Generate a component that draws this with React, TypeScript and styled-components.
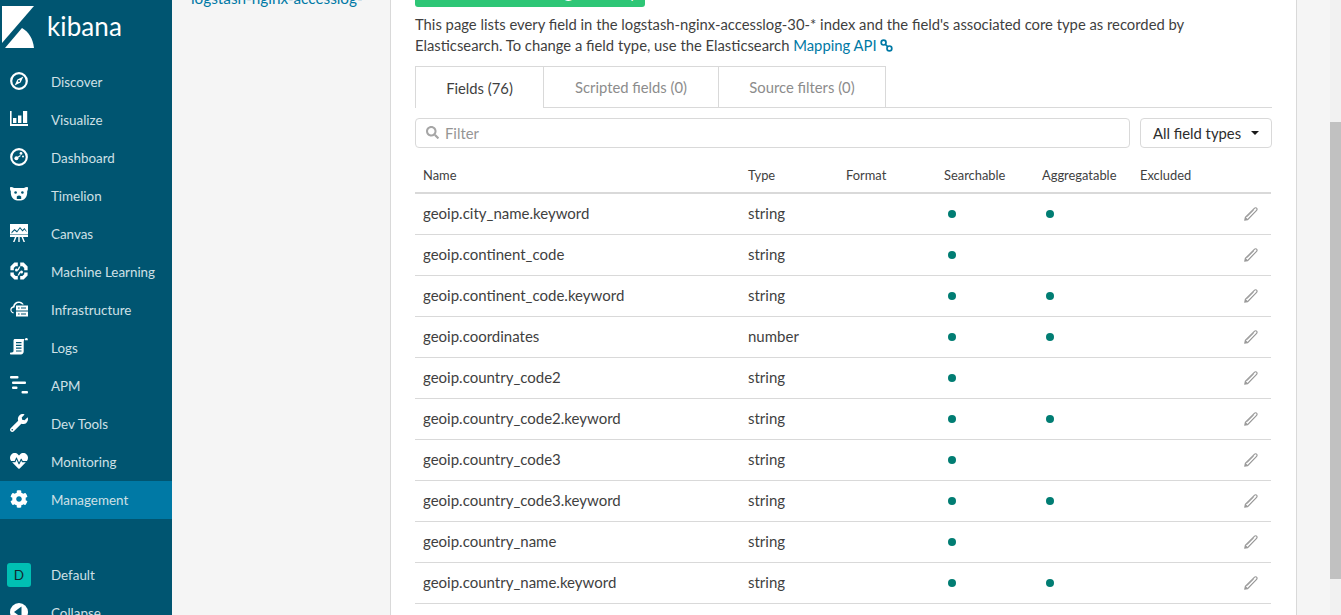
import React from 'react'
import styled, { createGlobalStyle } from 'styled-components'
import { FaCog, FaHeartbeat, FaSearch, FaWrench } from 'react-icons/fa'

const Global = createGlobalStyle`
	html, body {
		margin: 0;
		padding: 0;
		height: 615px;
		overflow: hidden;
		background: #f5f5f5;
	}
	* {
		box-sizing: border-box;
	}
`

const Page = styled.div`
	display: flex;
	height: 615px;
	overflow: hidden;
	font-family: Lato, 'Liberation Sans', sans-serif;
	color: #3f3f3f;
`

const Sidebar = styled.nav`
	flex: 0 0 172px;
	background: #005571;
	display: flex;
	flex-direction: column;
	overflow: hidden;
`

const Brand = styled.div`
	flex: 0 0 63px;
	display: flex;
	align-items: flex-start;
	padding: 6px 0 0 2px;
	gap: 13px;
`

const BrandName = styled.span`
	font-size: 26px;
	line-height: 27px;
	margin-top: 7px;
	color: #fff;
	letter-spacing: 0.1px;
`

const NavList = styled.div`
	flex: 0 0 auto;
	display: flex;
	flex-direction: column;
`

const BottomList = styled(NavList)`
	margin-top: 37px;
`

const NavItem = styled.div<{ $active?: boolean }>`
	flex: 0 0 38px;
	height: 38px;
	display: flex;
	align-items: center;
	padding-left: 10px;
	gap: 23px;
	font-size: 13.4px;
	color: #cfe0e6;
	background: ${(p) => (p.$active ? '#0079a5' : 'transparent')};
	svg {
		flex: 0 0 18px;
		width: 18px;
		height: 18px;
		color: #fff;
		margin-top: -2px;
	}
`

const AvatarItem = styled(NavItem)`
	padding-left: 7px;
	gap: 20px;
`

const Avatar = styled.span`
	width: 24px;
	height: 24px;
	border-radius: 3px;
	background: #00bfb3;
	color: #10272e;
	font-size: 13.5px;
	display: flex;
	align-items: center;
	justify-content: center;
`

const SubNav = styled.aside`
	flex: 0 0 219px;
	background: #f5f5f5;
	border-right: 1px solid #d9d9d9;
	padding-left: 19px;
	overflow: hidden;
`

const PatternLink = styled.a`
	display: block;
	margin-top: -12px;
	font-size: 15.3px;
	line-height: 20px;
	color: #0079a5;
`

const Main = styled.main`
	flex: 0 0 906px;
	background: #fff;
	border-right: 1px solid #d9d9d9;
	padding: 0 24px;
	overflow: hidden;
`

const TimeBadge = styled.div`
	width: 230px;
	height: 7px;
	background: #2ec676;
	border-radius: 0 0 3px 3px;
	overflow: hidden;
	color: #fff;
	font-size: 14px;
	line-height: 20px;
	text-align: center;
`

const BadgeText = styled.div`
	margin-top: -16px;
`

const Description = styled.p`
	margin: 7px 0 0;
	font-size: 14.8px;
	line-height: 21px;
	color: #3f3f3f;
`

const Anchor = styled.a`
	color: #0079a5;
	svg {
		width: 13px;
		height: 13px;
		margin-left: 3px;
		vertical-align: -1px;
	}
`

const Tabs = styled.div`
	display: flex;
	margin-top: 10px;
	height: 42px;
	width: 857px;
	border-bottom: 1px solid #d9d9d9;
`

const Tab = styled.div<{ $active?: boolean; $w: number }>`
	flex: 0 0 ${(p) => p.$w}px;
	height: ${(p) => (p.$active ? 42 : 41)}px;
	border: 1px solid #d9d9d9;
	border-left-width: ${(p) => (p.$active ? 1 : 0)}px;
	border-bottom: 0;
	background: #fff;
	display: flex;
	align-items: center;
	justify-content: center;
	font-size: 14.8px;
	color: ${(p) => (p.$active ? '#3f3f3f' : '#8c8c8c')};
`

const FilterRow = styled.div`
	display: flex;
	gap: 10px;
	margin-top: 10px;
	width: 857px;
`

const FilterBox = styled.div`
	flex: 1;
	height: 30px;
	border: 1px solid #d9d9d9;
	border-radius: 4px;
	display: flex;
	align-items: center;
	padding: 0 0 1px 10px;
	gap: 6px;
	font-size: 14.8px;
	color: #959595;
	svg {
		width: 13px;
		height: 13px;
		color: #a6a6a6;
	}
`

const TypeSelect = styled.div`
	flex: 0 0 132px;
	height: 30px;
	border: 1px solid #d9d9d9;
	border-radius: 4px;
	display: flex;
	align-items: center;
	padding: 0 0 1px 12px;
	font-size: 14.8px;
	color: #2d2d2d;
`

const Caret = styled.span`
	width: 0;
	height: 0;
	margin-left: 10px;
	border-left: 4px solid transparent;
	border-right: 4px solid transparent;
	border-top: 4px solid #1a1a1a;
`

const FieldTable = styled.table`
	border-collapse: collapse;
	table-layout: fixed;
	width: 856px;
	margin-top: 10px;
`

const HeadCell = styled.th`
	height: 35px;
	padding: 0 8px;
	text-align: left;
	font-weight: 400;
	font-size: 12.9px;
	color: #3f3f3f;
	border-bottom: 2px solid #d9d9d9;
`

const Cell = styled.td`
	height: 41px;
	padding: 0 8px 2px;
	font-size: 15px;
	color: #3f3f3f;
	border-bottom: 1px solid #d9d9d9;
`

const EditCell = styled(Cell)`
	text-align: right;
	padding: 0 13px 0 0;
	svg {
		display: block;
		margin-left: auto;
		width: 14px;
		height: 14px;
	}
`

const Dot = styled.span`
	display: block;
	width: 8px;
	height: 8px;
	margin: 2px 0 0 4px;
	border-radius: 50%;
	background: #017d73;
`

const Gutter = styled.div`
	flex: 0 0 33px;
	background: #f5f5f5;
`

const ScrollTrack = styled.div`
	flex: 0 0 11px;
	background: #f1f1f1;
	padding-top: 122px;
`

const ScrollThumb = styled.div`
	height: 457px;
	background: #c1c1c1;
`

const LogoMark = () => (
	<svg width="32" height="42" viewBox="0 0 32 42">
		<path d="M0 0h32L0 37z" fill="#fff" />
		<path d="M3 42L20 22c7 4 11 11 12 20z" fill="#fff" />
	</svg>
)

const Discover = () => (
	<svg viewBox="0 0 18 18">
		<circle cx="9" cy="9" r="7.8" fill="none" stroke="currentColor" strokeWidth="2.2" />
		<path d="M13.4 4.6L10.6 10.6 4.6 13.4 7.4 7.4z" fill="currentColor" />
		<circle cx="9" cy="9" r="1" fill="#005571" />
	</svg>
)

const Visualize = () => (
	<svg viewBox="0 0 18 18" fill="currentColor">
		<path d="M0 1h1.6v13H18v2H0z" />
		<path d="M3 8h3.4v5H3zM8 5.5h3.4V13H8zM13 1h4.2v12H13z" />
	</svg>
)

const Dashboard = () => (
	<svg viewBox="0 0 18 18">
		<circle cx="9" cy="9" r="7.8" fill="none" stroke="currentColor" strokeWidth="2.2" />
		<circle cx="6.4" cy="10.2" r="2" fill="currentColor" />
		<circle cx="11" cy="5.4" r="1.400" fill="currentColor" />
		<path d="M6.400 10.200L10.500 7.600" stroke="currentColor" strokeWidth="1.200" />
		<circle cx="13" cy="8.600" r="1" fill="currentColor" />
	</svg>
)

const Timelion = () => (
	<svg viewBox="0 0 18 18">
		<path
			d="M0 2c0-.6.5-1 1-1 1 0 2 .3 3 1h10c1-.7 2-1 3-1 .5 0 1 .4 1 1 0 1.500-.3 2.500-.8 3.200.2 3.600-.8 6.400-3 8-1.200.8-2.700 1.300-5.200 1.300s-4-.5-5.200-1.300c-2.200-1.600-3.200-4.400-3-8C.3 4.500 0 3.500 0 2z"
			fill="currentColor"
		/>
		<circle cx="5.600" cy="6.500" r="1.300" fill="#005571" />
		<circle cx="12.400" cy="6.500" r="1.300" fill="#005571" />
		<path d="M6.800 10.500c1.400-1.300 3-1.300 4.400 0v2.500H6.800z" fill="#005571" />
	</svg>
)

const Canvas = () => (
	<svg viewBox="0 0 18 18" fill="currentColor">
		<path d="M0 11h18v2H0z" />
		<path
			d="M0 0h18v10.500H0zM1.500 8l3-3 2.500 2 3-4 2.500 3 2-2 2 3v1l-2-2.500-2 2-2.500-3-3 4-2.500-2-3 3z"
			fillRule="evenodd"
		/>
		<path d="M5 13h1.500L4.500 18H3zM8.300 13h1.400v5H8.300zM11.500 13H13l2 5h-1.500z" />
	</svg>
)

const MachineLearning = () => (
	<svg viewBox="0 0 18 18" fill="currentColor">
		<path d="M7.800 .5v3.700H5.600L3.800 6v2.300H.4V4.400L4.400 .5zM10.200 .5h3.400l4 3.900v3.900h-3.400V6l-1.800-1.800h-2.200z" />
		<path d="M.4 10.500h3.400v1.700l1.800 1.800h2.200v3.500H4.400l-4-4zM14.200 10.500h3.400v3l-4 4h-3.400V14h2.200l1.800-1.800z" />
		<circle cx="6.500" cy="8" r="1.500" />
		<circle cx="11.500" cy="10" r="1.500" />
		<path d="M7.500 7.500L9 4.500h1.500L8.500 8.500zM10.500 10.500L9 13.500H7.500l2-4z" />
	</svg>
)

const Infrastructure = () => (
	<svg viewBox="0 0 18 18" fill="currentColor">
		<path d="M3.500 13.500C1.500 13 .3 11.600 .3 9.800c0-1.700 1.100-3 2.700-3.500C3.600 3.500 6 1.500 8.800 1.500c2.200 0 4 1 5 2.900h-1.800c-.8-1-2-1.500-3.200-1.500-2.200 0-4 1.700-4.300 4.500-1.700 0-3 1-3 2.500 0 1.100.8 1.900 2 2.200z" />
		<path d="M6 5.500h12v5H6zM6 11.500h12v5H6z" />
		<path d="M8 7.500h1.600v1H8zM8 13.500h1.600v1H8zM11 7.500h5v1h-5zM11 13.500h5v1h-5z" fill="#005571" />
	</svg>
)

const Logs = () => (
	<svg viewBox="0 0 18 18" fill="currentColor">
		<path d="M4.500 1h10l-.4 1c-.3.6-.4 1.200-.4 2v9.500c0 1.500-1 3-2.900 3H1c-.6 0-1-.4-1-1s.4-1 1-1h.9c1 0 1.600-.6 1.600-1.700V3c0-1 .4-1.600 1-2z" />
		<path d="M15 1.500a1.400 1.400 0 012.800 0v.8H15z" />
		<path d="M6 4h5.500v1.200H6zM6 6.800h5.500V8H6zM6 9.600h5.500v1.200H6zM6 12.400h5.500v1.200H6z" fill="#005571" />
	</svg>
)

const Apm = () => (
	<svg viewBox="0 0 18 18" fill="currentColor">
		<rect x="0" y="0" width="8.500" height="2.400" rx="1" />
		<rect x="2" y="5.500" width="14" height="2.400" rx="1" />
		<rect x="2" y="10.500" width="5.500" height="2.400" rx="1" />
		<rect x="11.500" y="15" width="6.500" height="2.400" rx="1" />
	</svg>
)

const Collapse = () => (
	<svg viewBox="0 0 18 18">
		<circle cx="9" cy="9" r="9" fill="currentColor" />
		<path d="M11.500 3.500v11L4 9z" fill="#005571" />
	</svg>
)

const Chain = () => (
	<svg viewBox="0 0 13 13" fill="none" stroke="#0079a5" strokeWidth="1.700">
		<circle cx="3.600" cy="3.600" r="2.400" />
		<circle cx="9.400" cy="9.400" r="2.400" />
		<path d="M5.500 5.500l2 2" />
	</svg>
)

const Pencil = () => (
	<svg viewBox="0 0 14 14" fill="none" stroke="#999" strokeWidth="1.200">
		<path d="M3.600 12.600L.9 13.100l.5-2.700L10.600 1.200c.6-.6 1.500-.6 2 0 .6.6.6 1.500 0 2.100z" />
		<path d="M3.200 9.600l6.600-6.600M5 11l6.600-6.600" strokeWidth="0.800" />
		<path d="M.7 13.300l.7-3.400 2.700 2.700z" fill="#999" stroke="none" />
	</svg>
)

const NAV_ITEMS: [string, React.ReactNode][] = [
	['Discover', <Discover />],
	['Visualize', <Visualize />],
	['Dashboard', <Dashboard />],
	['Timelion', <Timelion />],
	['Canvas', <Canvas />],
	['Machine Learning', <MachineLearning />],
	['Infrastructure', <Infrastructure />],
	['Logs', <Logs />],
	['APM', <Apm />],
	['Dev Tools', <FaWrench />],
	['Monitoring', <FaHeartbeat />],
	['Management', <FaCog />],
]

const COLUMNS: [string, number][] = [
	['Name', 325],
	['Type', 98],
	['Format', 98],
	['Searchable', 98],
	['Aggregatable', 98],
	['Excluded', 98],
	['', 41],
]

const FIELDS: [string, string, boolean][] = [
	['geoip.city_name.keyword', 'string', true],
	['geoip.continent_code', 'string', false],
	['geoip.continent_code.keyword', 'string', true],
	['geoip.coordinates', 'number', true],
	['geoip.country_code2', 'string', false],
	['geoip.country_code2.keyword', 'string', true],
	['geoip.country_code3', 'string', false],
	['geoip.country_code3.keyword', 'string', true],
	['geoip.country_name', 'string', false],
	['geoip.country_name.keyword', 'string', true],
]

export default function App() {
	return (
		<Page>
			<Global />
			<Sidebar>
				<Brand>
					<LogoMark />
					<BrandName>kibana</BrandName>
				</Brand>
				<NavList>
					{NAV_ITEMS.map(([label, icon]) => (
						<NavItem key={label} $active={label === 'Management'}>
							{icon}
							{label}
						</NavItem>
					))}
				</NavList>
				<BottomList>
					<AvatarItem>
						<Avatar>D</Avatar>
						Default
					</AvatarItem>
					<NavItem>
						<Collapse />
						Collapse
					</NavItem>
				</BottomList>
			</Sidebar>
			<SubNav>
				<PatternLink>logstash-nginx-accesslog-</PatternLink>
			</SubNav>
			<Main>
				<TimeBadge>
					<BadgeText>Time Filter field name: @timestamp</BadgeText>
				</TimeBadge>
				<Description>
					This page lists every field in the logstash-nginx-accesslog-30-* index and the field's associated core type as recorded by
					<br />
					Elasticsearch. To change a field type, use the Elasticsearch{' '}
					<Anchor>
						Mapping API
						<Chain />
					</Anchor>
				</Description>
				<Tabs>
					<Tab $active $w={129}>
						Fields (76)
					</Tab>
					<Tab $w={175}>Scripted fields (0)</Tab>
					<Tab $w={167}>Source filters (0)</Tab>
				</Tabs>
				<FilterRow>
					<FilterBox>
						<FaSearch />
						Filter
					</FilterBox>
					<TypeSelect>
						All field types
						<Caret />
					</TypeSelect>
				</FilterRow>
				<FieldTable>
					<colgroup>
						{COLUMNS.map(([name, width]) => (
							<col key={name} width={width} />
						))}
					</colgroup>
					<thead>
						<tr>
							{COLUMNS.map(([name]) => (
								<HeadCell key={name}>{name}</HeadCell>
							))}
						</tr>
					</thead>
					<tbody>
						{FIELDS.map(([name, type, aggregatable]) => (
							<tr key={name}>
								<Cell>{name}</Cell>
								<Cell>{type}</Cell>
								<Cell />
								<Cell>
									<Dot />
								</Cell>
								<Cell>{aggregatable && <Dot />}</Cell>
								<Cell />
								<EditCell>
									<Pencil />
								</EditCell>
							</tr>
						))}
					</tbody>
				</FieldTable>
			</Main>
			<Gutter />
			<ScrollTrack>
				<ScrollThumb />
			</ScrollTrack>
		</Page>
	)
}
